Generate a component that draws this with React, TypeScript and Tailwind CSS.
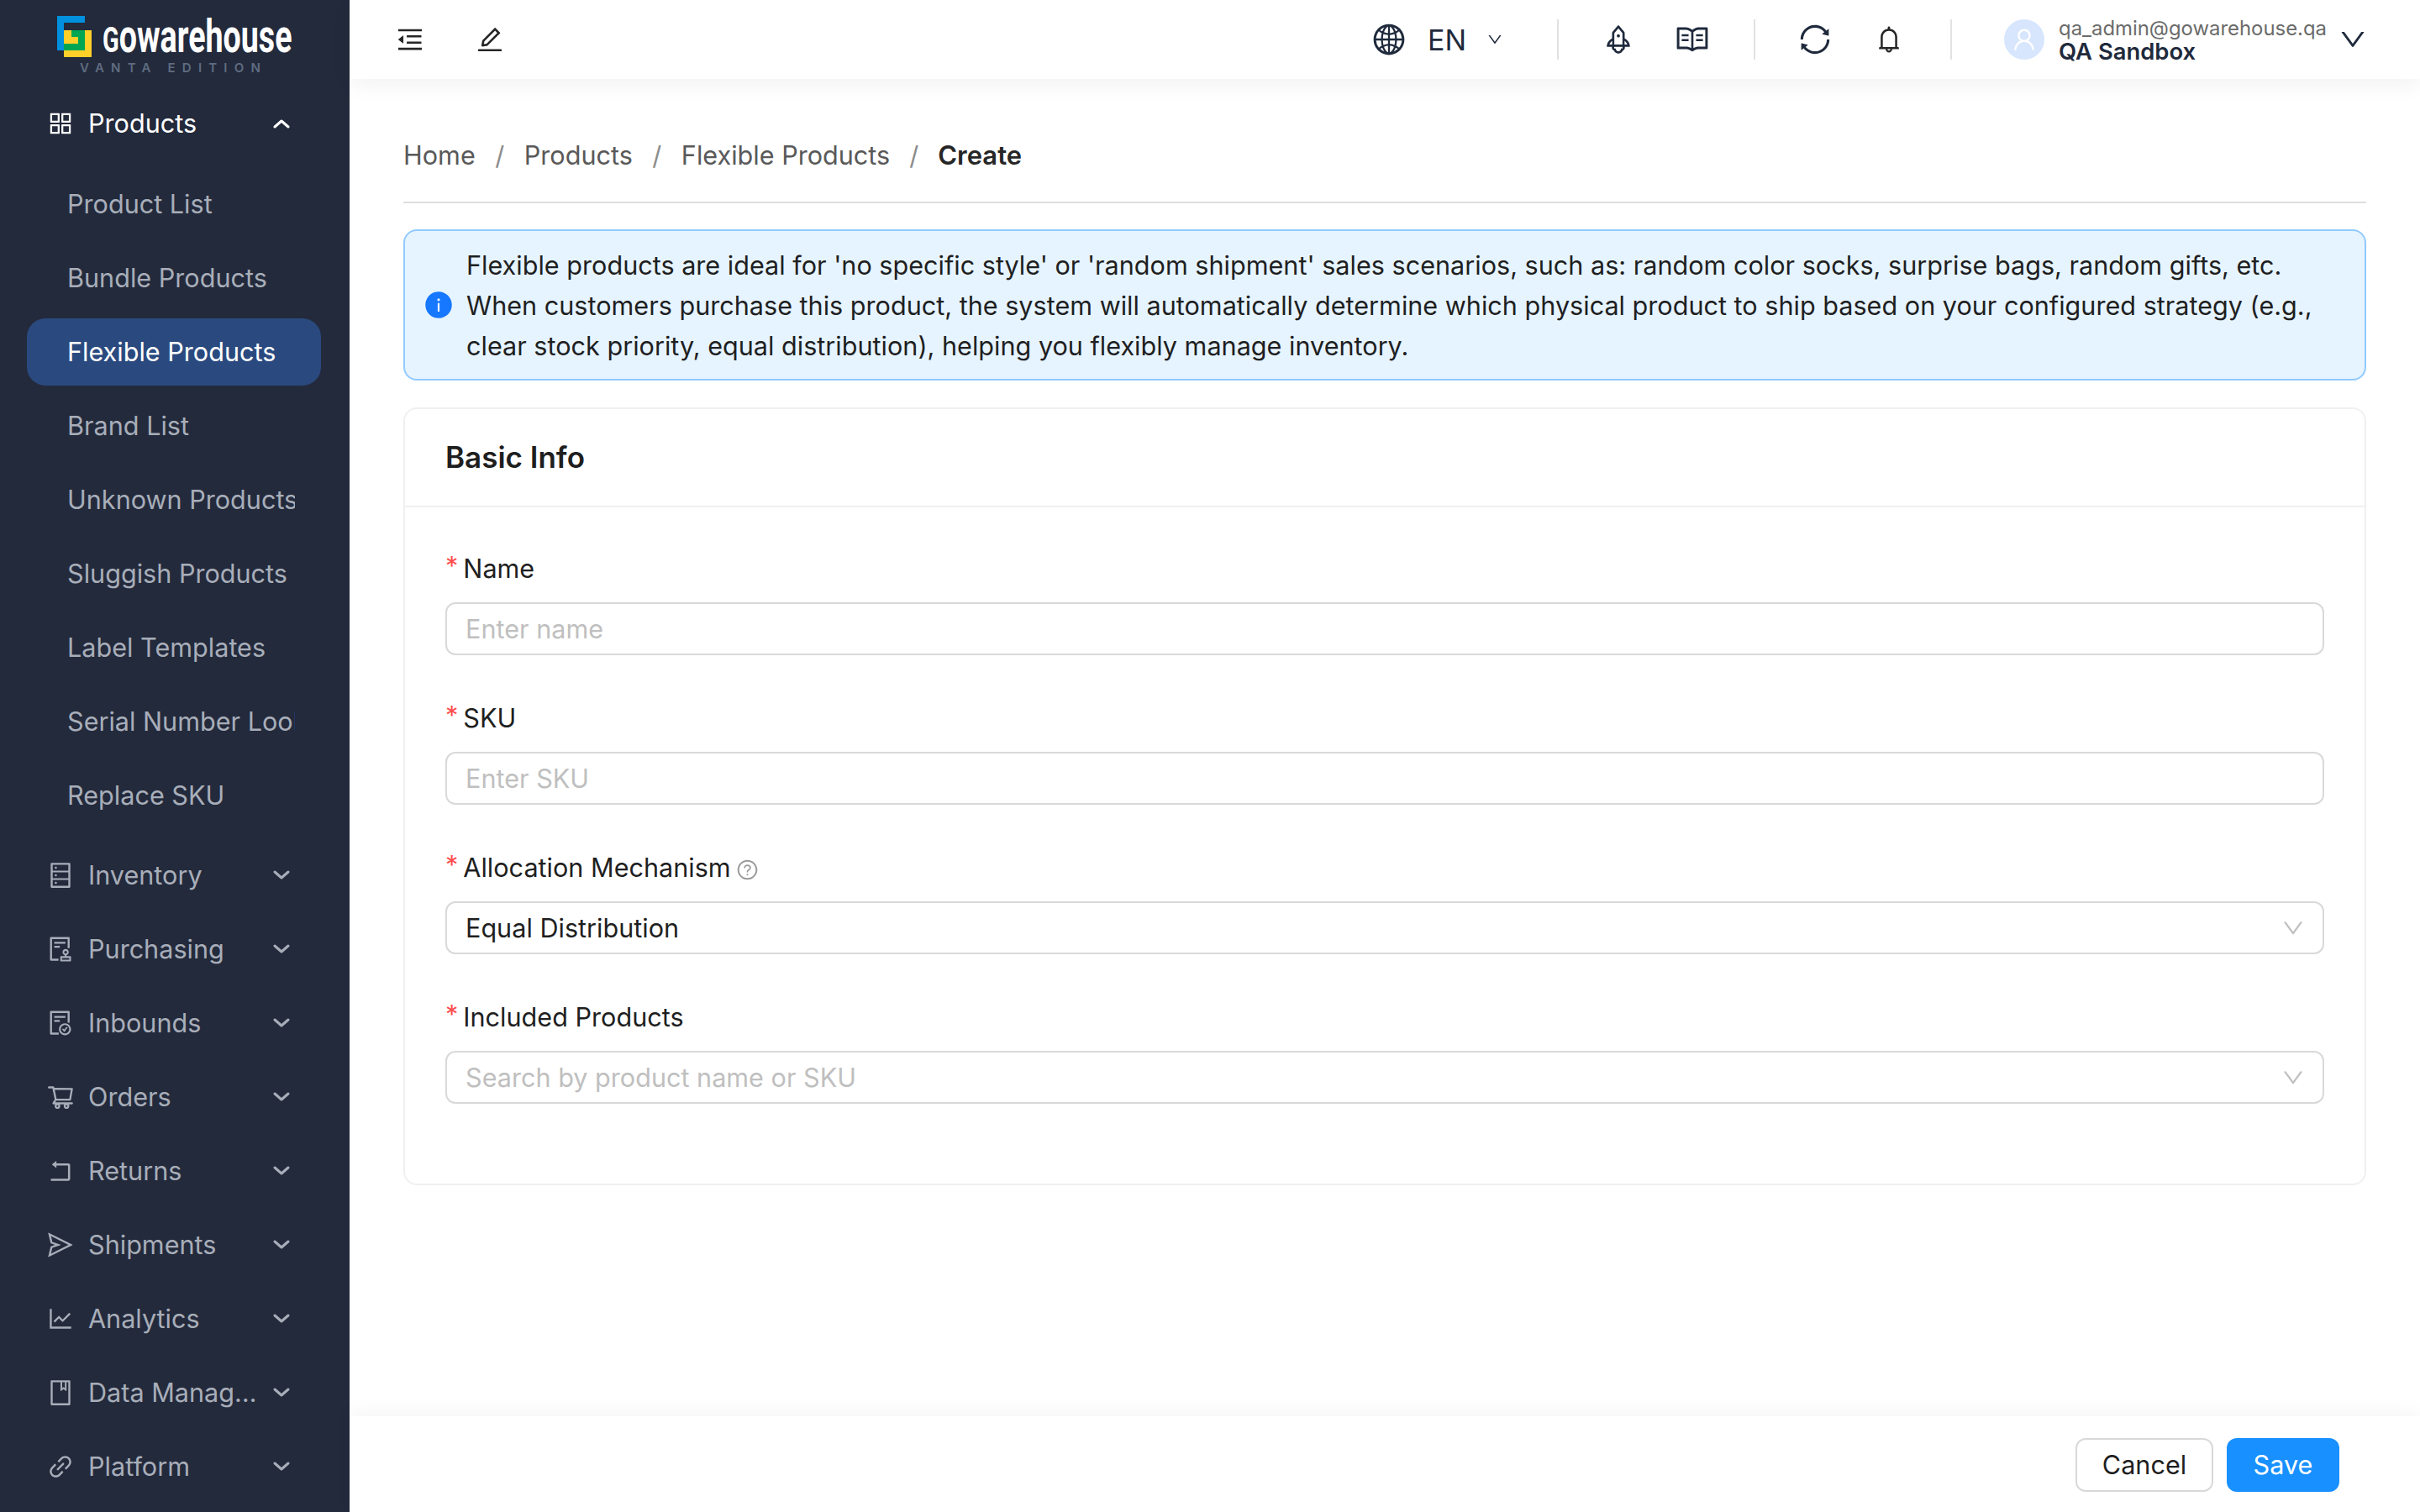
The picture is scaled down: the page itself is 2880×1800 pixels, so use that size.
import {
  AiFillInfoCircle,
  AiOutlineAppstore,
  AiOutlineAudit,
  AiOutlineBell,
  AiOutlineBook,
  AiOutlineDatabase,
  AiOutlineDown,
  AiOutlineEdit,
  AiOutlineFileDone,
  AiOutlineGlobal,
  AiOutlineLineChart,
  AiOutlineLink,
  AiOutlineMenuFold,
  AiOutlineQuestionCircle,
  AiOutlineRead,
  AiOutlineRocket,
  AiOutlineRollback,
  AiOutlineSend,
  AiOutlineShoppingCart,
  AiOutlineSync,
  AiOutlineUser,
} from "react-icons/ai";

const subItems = [
  "Product List",
  "Bundle Products",
  "Flexible Products",
  "Brand List",
  "Unknown Products",
  "Sluggish Products",
  "Label Templates",
  "Serial Number Lookup",
  "Replace SKU",
];

const navItems = [
  { label: "Inventory", icon: AiOutlineDatabase },
  { label: "Purchasing", icon: AiOutlineAudit },
  { label: "Inbounds", icon: AiOutlineFileDone },
  { label: "Orders", icon: AiOutlineShoppingCart },
  { label: "Returns", icon: AiOutlineRollback },
  { label: "Shipments", icon: AiOutlineSend },
  { label: "Analytics", icon: AiOutlineLineChart },
  { label: "Data Management", icon: AiOutlineBook },
  { label: "Platform", icon: AiOutlineLink },
];

function Chevron({ up }: { up?: boolean }) {
  return (
    <svg viewBox="0 0 20 12" className="h-[12px] w-[20px] shrink-0" fill="none">
      <polyline
        points={up ? "2,10 10,3 18,10" : "2,2 10,9 18,2"}
        stroke="currentColor"
        strokeWidth="3"
        strokeLinecap="round"
        strokeLinejoin="round"
      />
    </svg>
  );
}

function Logo() {
  return (
    <div className="relative h-[107px] shrink-0">
      <svg viewBox="0 0 41 49" className="absolute left-[68px] top-[19px] h-[49px] w-[41px]">
        <path d="M0 0H33V8H8V41H0Z" fill="#0090dd" />
        <path d="M8 17H41V49H8Z" fill="#ffd02a" />
        <path d="M17 17H33V41H8V33H25V25H17Z" fill="#00a651" />
      </svg>
      <div className="absolute left-[122px] top-[8px] origin-left scale-x-[0.672] whitespace-nowrap font-['Roboto',sans-serif] text-[56px] font-bold leading-[70px] text-white">
        <span className="text-[43px] uppercase">g</span>owarehouse
      </div>
      <div className="absolute left-[95px] top-[72px] whitespace-nowrap font-['Inter',sans-serif] text-[15px] font-semibold leading-[18px] tracking-[8.2px] text-[#5f6c80]">
        VANTA EDITION
      </div>
    </div>
  );
}

function Sidebar() {
  return (
    <aside className="flex w-[416px] shrink-0 flex-col bg-[#232a3c] text-[#a8aeb9]">
      <Logo />
      <div className="flex h-[80px] items-center pl-[55px] pr-[71px] text-white">
        <AiOutlineAppstore className="mr-[16px] size-[34px] shrink-0" />
        <span className="flex-1 whitespace-nowrap">Products</span>
        <Chevron up />
      </div>
      <div className="mt-[16px] flex flex-col gap-[8px] pl-[32px] pr-[34px]">
        {subItems.map((item) => (
          <div
            key={item}
            className={
              item === "Flexible Products"
                ? "flex h-[80px] items-center rounded-[22px] bg-[#2a4a7f] pl-[48px] text-white"
                : "flex h-[80px] items-center pl-[48px]"
            }
          >
            <span className="w-[271px] overflow-hidden whitespace-nowrap">{item}</span>
          </div>
        ))}
      </div>
      <div className="mt-[15px] flex flex-col gap-[8px]">
        {navItems.map(({ label, icon: Icon }) => (
          <div key={label} className="flex h-[80px] items-center pl-[55px] pr-[71px]">
            <Icon className="mr-[16px] size-[34px] shrink-0" />
            <span className="mr-[14px] min-w-0 flex-1 truncate">{label}</span>
            <Chevron />
          </div>
        ))}
      </div>
    </aside>
  );
}

function Header() {
  return (
    <header className="relative z-10 flex h-[94px] shrink-0 items-center bg-white pl-[54px] pr-[62px] shadow-[0_8px_24px_rgba(0,0,0,0.05)]">
      <AiOutlineMenuFold className="size-[36px] text-[#262626]" />
      <AiOutlineEdit className="ml-[59px] size-[36px] text-[#262626]" />
      <div className="flex-1" />
      <AiOutlineGlobal className="size-[42px] text-[#1f2a3c]" />
      <span className="ml-[25px] text-[34px] text-[#1f2a3c]">EN</span>
      <AiOutlineDown className="ml-[24px] size-[20px] text-[#1f2a3c]" />
      <div className="ml-[64px] mr-[51px] h-[48px] w-[2px] bg-[#e2e2e2]" />
      <AiOutlineRocket className="size-[40px] text-[#1f2a3c]" />
      <AiOutlineRead className="ml-[47px] size-[42px] text-[#1f2a3c]" />
      <div className="ml-[52px] mr-[50px] h-[48px] w-[2px] bg-[#e2e2e2]" />
      <AiOutlineSync className="size-[42px] text-[#1f2a3c]" />
      <AiOutlineBell className="ml-[49px] size-[36px] text-[#262626]" />
      <div className="ml-[55px] mr-[62px] h-[48px] w-[2px] bg-[#e2e2e2]" />
      <div className="flex size-[48px] items-center justify-center rounded-full bg-[#d7e6fd]">
        <AiOutlineUser className="size-[32px] text-white" />
      </div>
      <div className="ml-[17px] flex flex-col pt-[2px]">
        <span className="text-[23.9px] leading-[26px] text-[#6b6b6b]">qa_admin@gowarehouse.qa</span>
        <span className="text-[27.4px] font-semibold leading-[28px] text-[#1f2a3c]">QA Sandbox</span>
      </div>
      <AiOutlineDown className="ml-[13px] size-[36px] text-[#1f2a3c]" />
    </header>
  );
}

function Label({ text, help }: { text: string; help?: boolean }) {
  return (
    <div className="mb-[20px] flex h-[40px] items-center text-[#1f1f1f]">
      <span className="mr-[6px] -translate-y-[3px] text-[#ff4d4f]">*</span>
      <span>{text}</span>
      {help && <AiOutlineQuestionCircle className="ml-[6px] mt-[4px] size-[27px] text-[#9a9a9a]" />}
    </div>
  );
}

function Field({
  label,
  help,
  placeholder,
  value,
  select,
}: {
  label: string;
  help?: boolean;
  placeholder?: string;
  value?: string;
  select?: boolean;
}) {
  return (
    <div className="mb-[55px]">
      <Label text={label} help={help} />
      <div className="flex h-[63px] items-center rounded-[12px] border-2 border-[#d9d9d9] pl-[22px] pr-[20px]">
        <span className={value ? "flex-1 text-[#1f1f1f]" : "flex-1 text-[#bfbfbf]"}>{value ?? placeholder}</span>
        {select && <AiOutlineDown className="size-[30px] text-[#bfbfbf]" />}
      </div>
    </div>
  );
}

function Content() {
  return (
    <main className="flex-1 pl-[64px] pr-[64px]">
      <nav className="flex h-[148px] items-center border-b-2 border-[#dedede] pt-[35px] text-[#595959]">
        <span>Home</span>
        <span className="mx-[23.5px] text-[#8c8c8c]">/</span>
        <span>Products</span>
        <span className="mx-[23.5px] text-[#8c8c8c]">/</span>
        <span>Flexible Products</span>
        <span className="mx-[23px] text-[#8c8c8c]">/</span>
        <span className="mt-[2px] text-[31px] font-semibold text-[#262626]">Create</span>
      </nav>
      <div className="mt-[31px] flex h-[180px] items-center rounded-[16px] border-2 border-[#91caff] bg-[#e6f4ff] pl-[22px] pr-[40px] text-[#1f1f1f]">
        <AiFillInfoCircle className="mr-[15px] size-[36px] shrink-0 text-[#1677ff]" />
        <p className="pt-[2px] leading-[48px]">
          Flexible products are ideal for 'no specific style' or 'random shipment' sales scenarios, such as: random
          color socks, surprise bags, random gifts, etc.
          <br />
          When customers purchase this product, the system will automatically determine which physical product to ship
          based on your configured strategy (e.g.,
          <br />
          clear stock priority, equal distribution), helping you flexibly manage inventory.
        </p>
      </div>
      <section className="mt-[32px] rounded-[16px] border-2 border-[#f0f0f0]">
        <div className="flex h-[117px] items-center border-b-2 border-[#f0f0f0] pl-[48px] text-[35px] font-semibold text-[#1f1f1f]">
          Basic Info
        </div>
        <div className="px-[48px] pb-[40px] pt-[53px]">
          <Field label="Name" placeholder="Enter name" />
          <Field label="SKU" placeholder="Enter SKU" />
          <Field label="Allocation Mechanism" help value="Equal Distribution" select />
          <Field label="Included Products" placeholder="Search by product name or SKU" select />
        </div>
      </section>
    </main>
  );
}

function Footer() {
  return (
    <footer className="flex h-[114px] shrink-0 items-center justify-end gap-[16px] bg-white pr-[96px] pt-[2px] shadow-[0_-6px_20px_rgba(0,0,0,0.04)]">
      <button className="h-[64px] w-[164px] rounded-[12px] border-2 border-[#d9d9d9] bg-white text-[#1f1f1f]">
        Cancel
      </button>
      <button className="h-[64px] w-[134px] rounded-[12px] bg-[#1890ff] text-white">Save</button>
    </footer>
  );
}

export default function App() {
  return (
    <div className="flex h-[1800px] w-[2880px] overflow-hidden bg-white font-['Inter',sans-serif] text-[30.6px]">
      <Sidebar />
      <div className="flex min-w-0 flex-1 flex-col">
        <Header />
        <Content />
        <Footer />
      </div>
    </div>
  );
}
